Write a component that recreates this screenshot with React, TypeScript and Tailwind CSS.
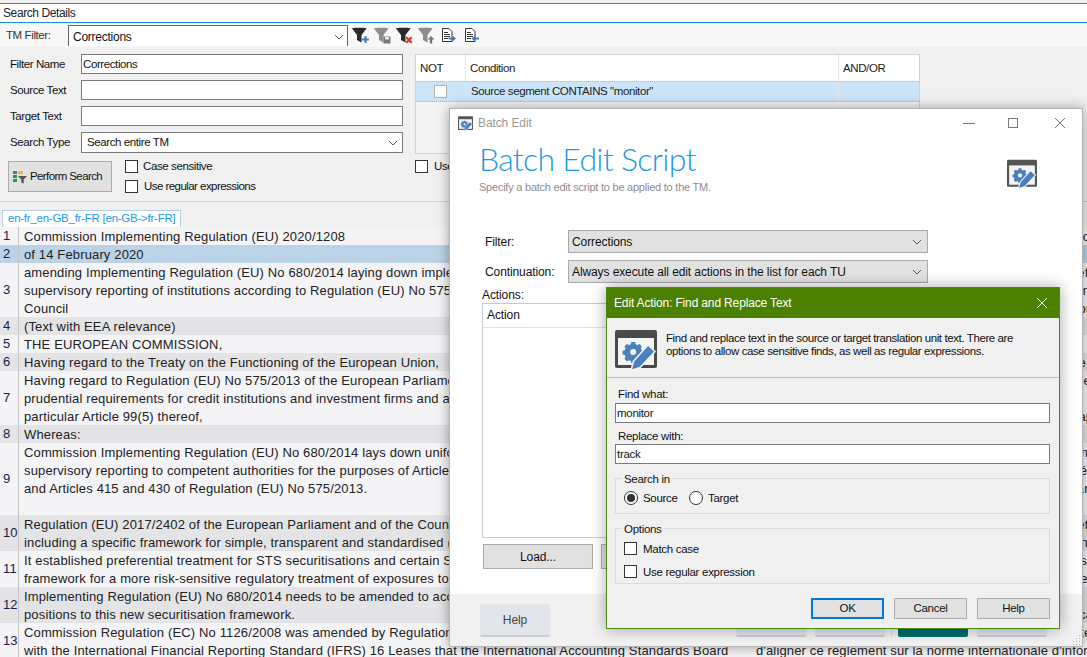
import type { ReactNode } from "react";

const rows = [
  { n: 1, src: ["Commission Implementing Regulation (EU) 2020/1208"], tgt: ["Règlement d'exécution (UE) 2020/1208 de la Commission du 14 février, ici"] },
  { n: 2, src: ["of 14 February 2020"], tgt: ["du 14 février 2020"], selected: true },
  {
    n: 3,
    src: [
      "amending Implementing Regulation (EU) No 680/2014 laying down implementing technical",
      "supervisory reporting of institutions according to Regulation (EU) No 575/2013 of the European",
      "Council",
    ],
    tgt: [
      "modifiant le règlement d'exécution (UE) no 680/2014 définissant des normes",
      "prudentielle des établissements conformément au règlement (UE) no 575/2013 du s",
      "Conseil du Parlement et du conseil européens dans le protocol",
    ],
  },
  { n: 4, src: ["(Text with EEA relevance)"], tgt: ["(Texte présentant de l'intérêt pour l'EEE)"] },
  { n: 5, src: ["THE EUROPEAN COMMISSION,"], tgt: ["LA COMMISSION EUROPÉENNE,"] },
  { n: 6, src: ["Having regard to the Treaty on the Functioning of the European Union,"], tgt: ["vu le traité sur le fonctionnement de l'Union européenne,"] },
  {
    n: 7,
    src: [
      "Having regard to Regulation (EU) No 575/2013 of the European Parliament and of the Council",
      "prudential requirements for credit institutions and investment firms and amending Regulation",
      "particular Article 99(5) thereof,",
    ],
    tgt: [
      "vu le règlement (UE) no 575/2013 du Parlement européen et du Conseil du 26 juin, le",
      "exigences prudentielles applicables aux établissements de crédit et aux entreprises é",
      "(UE) no 648/2012, et notamment son article 99, paragraphe 5, et sur la base de l'o",
    ],
  },
  { n: 8, src: ["Whereas:"], tgt: ["considérant ce qui suit:"] },
  {
    n: 9,
    src: [
      "Commission Implementing Regulation (EU) No 680/2014 lays down uniform reporting formats",
      "supervisory reporting to competent authorities for the purposes of Articles 99, 101 and 394",
      "and Articles 415 and 430 of Regulation (EU) No 575/2013.",
      "",
    ],
    tgt: [
      "Le règlement d'exécution (UE) no 680/2014 de la Commission établit des modèles m",
      "aux fins de la communication d'informations aux autorités compétentes dans le cadre o",
      "prudentielle prévue aux articles 99, 101 et 394, et aux articles 415 et 430 du règlement p",
      "",
    ],
  },
  {
    n: 10,
    src: [
      "Regulation (EU) 2017/2402 of the European Parliament and of the Council lays down a general",
      "including a specific framework for simple, transparent and standardised (STS) securitisation",
    ],
    tgt: [
      "Le règlement (UE) 2017/2402 du Parlement européen et du Conseil a créé un cadre e",
      "cadre spécifique pour les titrisations simples, transparentes et standardisées dans tr",
    ],
  },
  {
    n: 11,
    src: [
      "It established preferential treatment for STS securitisations and certain SME exposures",
      "framework for a more risk-sensitive regulatory treatment of exposures to securitisations",
    ],
    tgt: [
      "Il a institué un traitement préférentiel pour les titrisations STS et pour certaines n",
      "un cadre plus sensible au risque pour le traitement réglementaire des expositions e",
    ],
  },
  {
    n: 12,
    src: [
      "Implementing Regulation (EU) No 680/2014 needs to be amended to accurately reflect",
      "positions to this new securitisation framework.",
    ],
    tgt: [
      "Il convient de modifier le règlement d'exécution (UE) no 680/2014 afin de refléter c",
      "les positions de titrisation dans ce nouveau cadre applicable à la titrisation, dans l",
    ],
  },
  {
    n: 13,
    src: [
      "Commission Regulation (EC) No 1126/2008 was amended by Regulation (EU) 2017/1986 to align",
      "with the International Financial Reporting Standard (IFRS) 16 Leases that the International Accounting Standards Board",
    ],
    tgt: [
      "Le règlement (CE) no 1126/2008 de la Commission a été modifié par le règlement (UE) e",
      "d'aligner ce règlement sur la norme internationale d'information financière",
    ],
  },
];

function Chevron() {
  return (
    <svg width="10" height="6" viewBox="0 0 10 6" className="shrink-0">
      <path d="M1 1l4 4 4-4" fill="none" stroke="#555" strokeWidth="1" />
    </svg>
  );
}

function Funnel({ color, children }: { color: string; children?: ReactNode }) {
  return (
    <svg width="17" height="17" viewBox="0 0 17 17" className="shrink-0">
      <path d="M0 1.500c0-1 14.500-1 14.500 0l-5 6.500v7.500l-4.500-2.500v-5z" fill={color} />
      {children}
    </svg>
  );
}

function DocArrow({ reverse }: { reverse?: boolean }) {
  return (
    <svg width="15" height="15" viewBox="0 0 15 15" className="shrink-0">
      <path d="M1.500 0.500h6.500l3 3v10h-9.500z" fill="#fff" stroke="#333" />
      <path d="M3 4.500h4M3 6.500h6M3 8.500h6M3 10.500h4" stroke="#333" />
      {reverse ? (
        <path d="M15 9.500h-4v-2l-3.500 3 3.500 3v-2h4z" fill="#3a7fc4" />
      ) : (
        <path d="M7.500 9.500h4v-2l3.500 3-3.500 3v-2h-4z" fill="#3a7fc4" />
      )}
    </svg>
  );
}

function ScriptIcon({ size, titleColor }: { size: number; titleColor: string }) {
  return (
    <svg width={size} height={size} viewBox="0 0 42 42" className="shrink-0">
      <path d="M2 1h38a2 2 0 0 1 2 2v34a2 2 0 0 1-2 2h-38a2 2 0 0 1-2-2v-34a2 2 0 0 1 2-2z" fill={titleColor} />
      <rect x="3" y="9" width="36" height="27" fill="#f4f4f4" />
      <g fill="#4a80bd">
        <path d="M16 11.500h5l.8 3 2.600 1.100 2.700-1.500 3.300 3.300-1.500 2.700 1 2.600 3 .8v4.700l-3 .8-1 2.500 1.500 2.700-3.300 3.300-2.700-1.500-2.600 1-.8 3h-5l-.8-3-2.500-1-2.700 1.500-3.400-3.300 1.500-2.700-1-2.500-3-.8v-4.700l3-.8 1-2.600-1.500-2.700 3.400-3.300 2.700 1.500 2.500-1.100z" transform="translate(4.500 4.500) scale(.74)" />
        <path d="M33 16l7 6.500-15 16-9 3 2.500-9.300z" stroke="#f4f4f4" strokeWidth="1.500" />
      </g>
      <circle cx="18.200" cy="23" r="3" fill="#f4f4f4" />
    </svg>
  );
}

function Check({ className }: { className: string }) {
  return <span className={`absolute h-[13px] w-[13px] border border-[#333] bg-white ${className}`} />;
}

function GreyBox({ children, className }: { children?: ReactNode; className: string }) {
  return <div className={`flex items-center border border-[#adadad] bg-[#e1e1e1] whitespace-nowrap ${className}`}>{children}</div>;
}

function Field({ label, value, select }: { label: string; value?: string; select?: boolean }) {
  return (
    <div className={`flex items-center ${select ? "h-[21px]" : "h-[20px]"}`}>
      <span className="w-[71px] pt-[1px] text-[#111]">{label}</span>
      <div className="flex h-full w-[322px] items-center justify-between border border-[#7a7a7a] bg-white pt-[1px] pr-[4px] pl-[1px] text-[#111]">
        <span className={select ? "pl-[4px]" : ""}>{value}</span>
        {select && <Chevron />}
      </div>
    </div>
  );
}

function SegmentRow({ n, src, tgt, selected }: { n: number; src: string[]; tgt: string[]; selected?: boolean }) {
  const bg = selected ? "bg-[#bad3e6]" : n % 2 === 0 ? "bg-[#e4e4e6]" : "bg-[#f4f4f7]";
  return (
    <div className={`flex shrink-0 text-[13px] tracking-[0.14px] text-[#222] ${bg}`}>
      <div className="flex w-[19px] shrink-0 items-center border-r border-[#c4c4c4] pl-[3px] leading-[18px] text-[#1a1a50]">{n}</div>
      <div className="w-[732px] shrink-0 overflow-hidden pl-[5px] leading-[20px] whitespace-nowrap">
        {src.map((l, i) => (
          <div key={i} className="h-[18px]">{l}</div>
        ))}
      </div>
      <div className="min-w-0 flex-1 overflow-hidden pl-[5px] leading-[20px] whitespace-nowrap">
        {tgt.map((l, i) => (
          <div key={i} className="h-[18px]">{l}</div>
        ))}
      </div>
    </div>
  );
}

function BatchEditWindow() {
  return (
    <div className="absolute top-[108px] left-[449px] flex h-[539px] w-[634px] flex-col border border-[#b4b4b4] bg-white text-[12px] tracking-[-0.1px] shadow-[0_0_12px_rgba(0,0,0,0.35)]">
      <div className="flex h-[28px] items-center pl-[8px]">
        <ScriptIcon size={15} titleColor="#555" />
        <span className="ml-[5px] text-[#9a9a9a]">Batch Edit</span>
        <div className="ml-auto flex items-center pr-[16px]">
          <span className="h-px w-[12px] bg-[#777]" />
          <span className="ml-[33px] h-[10px] w-[10px] border border-[#777]" />
          <svg width="12" height="12" viewBox="0 0 12 12" className="ml-[36px]">
            <path d="M1 1l10 10M11 1l-10 10" stroke="#777" strokeWidth="1" />
          </svg>
        </div>
      </div>
      <div className="flex items-start justify-between pr-[45px] pl-[29px]">
        <div>
          <div className="font-['Lato'] text-[32px] leading-[44px] font-light tracking-[-0.7px] text-[#1e9ae0]">Batch Edit Script</div>
          <div className="mt-[-1px] text-[11px] leading-[14px] tracking-[-0.23px] text-[#8c8c8c]">Specify a batch edit script to be applied to the TM.</div>
        </div>
        <div className="mt-[22px]">
          <ScriptIcon size={30} titleColor="#555" />
        </div>
      </div>
      <div className="mt-[36px] flex flex-col pl-[35px] text-[#111]">
        <div className="flex items-center">
          <span className="w-[83px]">Filter:</span>
          <div className="flex h-[23px] w-[360px] items-center justify-between border border-[#a8a8a8] bg-[#e1e1e1] pr-[5px] pl-[3px]">
            Corrections
            <Chevron />
          </div>
        </div>
        <div className="mt-[7px] flex items-center">
          <span className="w-[83px]">Continuation:</span>
          <div className="flex h-[23px] w-[360px] items-center justify-between border border-[#a8a8a8] bg-[#e1e1e1] pr-[5px] pl-[3px]">
            Always execute all edit actions in the list for each TU
            <Chevron />
          </div>
        </div>
        <div className="mt-[4px] ml-[-3px] leading-[16px]">Actions:</div>
      </div>
      <div className="ml-[32px] h-[235px] w-[300px] border border-[#c0ccd4]">
        <div className="h-[24px] border-b border-[#e0e0e0] pl-[4px] leading-[23px] text-[#111]">Action</div>
      </div>
      <div className="mt-[6px] ml-[33px] flex gap-[8px]">
        <GreyBox className="h-[25px] w-[110px] justify-center text-[#111]">Load...</GreyBox>
        <GreyBox className="h-[25px] w-[110px]" />
      </div>
      <div className="relative mt-auto flex h-[52px] items-start bg-[#f1f1f1] pt-[10px] pr-[35px] pl-[30px]">
        <div className="flex h-[33px] w-[70px] items-center justify-center rounded-[2px] border-b-2 border-[#c8ced3] bg-[#e2e6ea] text-[#444]">Help</div>
        <div className="ml-auto flex items-start">
          <div className="h-[33px] w-[70px] rounded-[2px] border-b-2 border-[#c8ced3] bg-[#e2e6ea]" />
          <div className="ml-[9px] h-[33px] w-[70px] rounded-[2px] border-b-2 border-[#c8ced3] bg-[#e2e6ea]" />
          <div className="ml-[6px] h-[33px] w-px bg-[#d8d8d8]" />
          <div className="ml-[6px] h-[33px] w-[70px] rounded-[2px] bg-[#006d6d]" />
          <div className="ml-[9px] h-[33px] w-[70px] rounded-[2px] border-b-2 border-[#c8ced3] bg-[#e2e6ea]" />
        </div>
        <svg width="10" height="10" viewBox="0 0 10 10" className="absolute right-[1px] bottom-[1px]">
          <path d="M8 0h1v1h-1zM5 3h1v1h-1zM8 3h1v1h-1zM2 6h1v1h-1zM5 6h1v1h-1zM8 6h1v1h-1zM2 9h1v1h-1zM5 9h1v1h-1zM8 9h1v1h-1z" fill="#a8b4bc" />
        </svg>
      </div>
    </div>
  );
}

function FindReplaceDialog() {
  return (
    <div className="absolute top-[287px] left-[606px] flex h-[342px] w-[454px] flex-col border border-[#4c8a10] bg-[#f0f0f0] tracking-[-0.3px] text-[#111] shadow-[0_0_14px_rgba(0,0,0,0.35)]">
      <div className="flex h-[30px] shrink-0 items-center justify-between bg-[#4c8000] pr-[11px] pl-[7px] text-[12px] tracking-[-0.15px] text-white">
        <span>Edit Action: Find and Replace Text</span>
        <svg width="12" height="12" viewBox="0 0 12 12">
          <path d="M1 1l10 10M11 1l-10 10" stroke="#fff" strokeWidth="1" />
        </svg>
      </div>
      <div className="flex h-[60px] shrink-0 items-center border-b border-[#bcbcbc] pl-[8px]">
        <div className="mt-[4px]">
          <ScriptIcon size={42} titleColor="#4a4a4a" />
        </div>
        <div className="mt-[-6px] ml-[9px] leading-[13px] tracking-[-0.4px]">
          Find and replace text in the source or target translation unit text. There are
          <br />
          options to allow case sensitive finds, as well as regular expressions.
        </div>
      </div>
      <div className="flex flex-col px-[8px]">
        <div className="mt-[9px] pl-[3px] leading-[14px]">Find what:</div>
        <div className="mt-[2px] flex h-[20px] w-[435px] items-center border border-[#7a7a7a] bg-white pt-[1px] pl-[1px]">monitor</div>
        <div className="mt-[6px] pl-[3px] leading-[14px]">Replace with:</div>
        <div className="mt-[1px] flex h-[20px] w-[435px] items-center border border-[#7a7a7a] bg-white pt-[1px] pl-[1px]">track</div>
        <fieldset className="relative mt-[14px] h-[36px] w-[435px] border border-[#dcdcdc]">
          <legend className="absolute top-[-7px] left-[6px] bg-[#f0f0f0] px-[2px] leading-[14px]">Search in</legend>
          <span className="absolute top-[12px] left-[8px] flex h-[14px] w-[14px] items-center justify-center rounded-full border border-[#333] bg-white">
            <span className="h-[8px] w-[8px] rounded-full bg-[#333]" />
          </span>
          <span className="absolute top-[11px] left-[27px] leading-[16px]">Source</span>
          <span className="absolute top-[12px] left-[73px] h-[14px] w-[14px] rounded-full border border-[#333] bg-white" />
          <span className="absolute top-[11px] left-[92px] leading-[16px]">Target</span>
        </fieldset>
        <fieldset className="relative mt-[14px] h-[56px] w-[435px] border border-[#dcdcdc]">
          <legend className="absolute top-[-7px] left-[6px] bg-[#f0f0f0] px-[2px] leading-[14px]">Options</legend>
          <Check className="top-[13px] left-[8px]" />
          <span className="absolute top-[12px] left-[27px] leading-[16px]">Match case</span>
          <Check className="top-[36px] left-[8px]" />
          <span className="absolute top-[35px] left-[27px] leading-[16px]">Use regular expression</span>
        </fieldset>
        <div className="mt-[14px] flex w-[435px] justify-end gap-[10px]">
          <div className="flex h-[21px] w-[73px] items-center justify-center border-2 border-[#0078d7] bg-[#e1e1e1]">OK</div>
          <GreyBox className="h-[21px] w-[73px] justify-center">Cancel</GreyBox>
          <GreyBox className="h-[21px] w-[73px] justify-center">Help</GreyBox>
        </div>
      </div>
    </div>
  );
}

export default function App() {
  return (
    <div className="relative flex h-[657px] w-[1087px] flex-col overflow-hidden bg-[#f0f0f0] font-['Liberation_Sans',sans-serif] text-[11.5px] tracking-[-0.4px]">
      <div className="mt-[3px] flex h-[20px] shrink-0 items-center border-y border-[#1b93d2] bg-white pl-[3px] text-[12px] tracking-[-0.4px] text-[#222]">Search Details</div>
      <div className="flex h-[24px] shrink-0 items-center bg-[#f7f7f7] pl-[6px]">
        <span className="w-[62px] pt-[1px] text-[#333]">TM Filter:</span>
        <div className="flex h-[21px] w-[280px] items-center justify-between border-t border-r border-l border-[#666] bg-white pt-[2px] pr-[3px] pl-[4px] text-[12px] tracking-[-0.25px] text-[#111]">
          Corrections
          <Chevron />
        </div>
        <div className="ml-[4px] flex items-center gap-[5px]">
          <Funnel color="#2a2a2a">
            <path d="M10 11.500h2.500v-2.500h2v2.500h2.500v2h-2.500v2.500h-2v-2.500h-2.500z" fill="#3a7fc4" />
          </Funnel>
          <Funnel color="#8d8d8d">
            <rect x="9.500" y="9.500" width="7" height="7" fill="#777" />
            <rect x="11" y="10" width="4" height="2.500" fill="#e8e8e8" />
          </Funnel>
          <Funnel color="#2a2a2a">
            <path d="M9.500 11l1.500-1.500 2 2 2-2 1.500 1.500-2 2 2 2-1.500 1.500-2-2-2 2-1.500-1.500 2-2z" fill="#d0332a" />
          </Funnel>
          <Funnel color="#8d8d8d">
            <path d="M13 9l3.500 3.500h-2.300v4h-2.400v-4h-2.300z" fill="#777" />
          </Funnel>
          <div className="ml-[1px]">
            <DocArrow />
          </div>
          <div className="ml-[3px]">
            <DocArrow reverse />
          </div>
        </div>
      </div>

      <div className="flex h-[155px] shrink-0 border-b border-[#d0d0d0] pt-[7px]">
        <div className="flex w-[415px] shrink-0 flex-col pl-[10px]">
          <div className="flex flex-col gap-[6px]">
            <Field label="Filter Name" value="Corrections" />
            <Field label="Source Text" />
            <Field label="Target Text" />
            <Field label="Search Type" value="Search entire TM" select />
          </div>
          <div className="relative mt-[8px] ml-[-2px]">
            <GreyBox className="h-[31px] w-[104px] gap-[2px] pl-[3px] tracking-[-0.6px] text-[#111]">
              <svg width="16" height="16" viewBox="0 0 16 16" className="shrink-0">
                <path d="M1 2h4v3h-4zM1 6h4v3h-4zM1 10h4v3h-4z" fill="#1f9a58" />
                <path d="M6 2h5v3h-5z" fill="#e8b84a" />
                <path d="M6 7h9l-3.300 3.500v4l-2.400-1v-3z" fill="#555" />
              </svg>
              Perform Search
            </GreyBox>
            <Check className="top-[-1px] left-[117px]" />
            <span className="absolute top-[-3px] left-[135px] whitespace-nowrap text-[#111]">Case sensitive</span>
            <Check className="top-[19px] left-[117px]" />
            <span className="absolute top-[17px] left-[136px] whitespace-nowrap tracking-[-0.55px] text-[#111]">Use regular expressions</span>
          </div>
        </div>
        <div className="relative w-[505px] shrink-0">
          <div className="h-[100px] w-[505px] border border-[#c9d3da] bg-[#f4f4f4] text-[#222]">
            <div className="flex h-[26px] bg-white leading-[26px]">
              <div className="w-[50px] border-r border-[#e4e4e4] pl-[4px]">NOT</div>
              <div className="w-[373px] border-r border-[#e4e4e4] pl-[4px]">Condition</div>
              <div className="pl-[4px]">AND/OR</div>
            </div>
            <div className="flex h-[21px] border-y border-dotted border-[#a8bccb] bg-[#cce4f7] leading-[19px]">
              <div className="flex w-[50px] items-center justify-center border-r border-[#e4e4e4]">
                <span className="h-[13px] w-[13px] border border-[#b0b0b0] bg-white" />
              </div>
              <div className="w-[373px] border-r border-[#e4e4e4] pl-[5px]">Source segment CONTAINS "monitor"</div>
            </div>
          </div>
          <Check className="top-[106px] left-0" />
          <span className="absolute top-[104px] left-[19px] text-[#111]">Use</span>
        </div>
      </div>

      <div className="flex h-[25px] shrink-0 items-end bg-[#f0f0f0] pl-[2px]">
        <div className="flex h-[17px] w-[179px] items-center border border-b-0 border-[#b6cfe0] bg-white pl-[5px] tracking-[-0.25px] whitespace-nowrap text-[#1b9ae2]">en-fr_en-GB_fr-FR [en-GB-&gt;fr-FR]</div>
      </div>

      <div className="flex min-h-0 flex-1 flex-col overflow-hidden">
        {rows.map((r) => (
          <SegmentRow key={r.n} {...r} />
        ))}
      </div>

      <BatchEditWindow />
      <FindReplaceDialog />
    </div>
  );
}
